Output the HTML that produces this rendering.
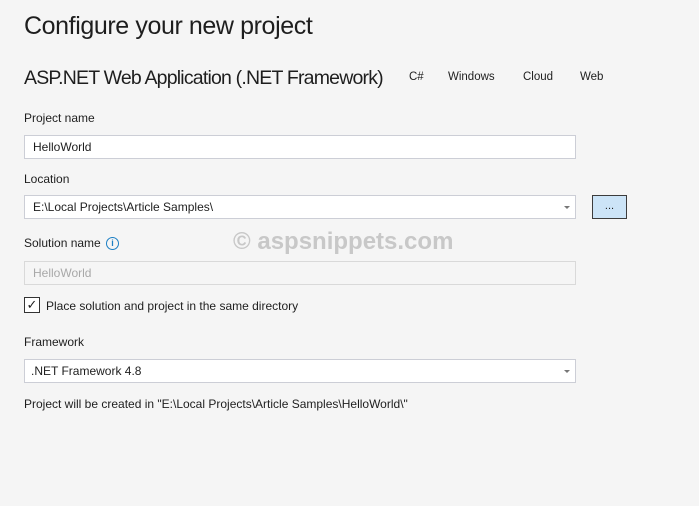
<!DOCTYPE html>
<html><head><style>
body{margin:0;width:699px;height:506px;background:#f5f5f5;font-family:"Liberation Sans",sans-serif;color:#1e1e1e;position:relative;overflow:hidden}
.a{position:absolute;white-space:nowrap}
.lbl{font-size:12px}
.in{position:absolute;left:24px;width:550px;height:22px;background:#fff;border:1px solid #ccced6;font-size:12px;line-height:22px;box-sizing:content-box}
.arr{position:absolute;right:5px;top:10px;width:0;height:0;border-left:3px solid transparent;border-right:3px solid transparent;border-top:3px solid #777}
</style></head><body>
<div class="a" style="left:24px;top:12px;font-size:25px;letter-spacing:-0.4px">Configure your new project</div>
<div class="a" style="left:24px;top:67px;font-size:19.5px;letter-spacing:-0.8px">ASP.NET Web Application (.NET Framework)</div>
<div class="a lbl" style="left:409px;top:71px;font-size:11.5px">C#</div>
<div class="a lbl" style="left:448px;top:71px;font-size:11.5px">Windows</div>
<div class="a lbl" style="left:523px;top:71px;font-size:11.5px">Cloud</div>
<div class="a lbl" style="left:580px;top:71px;font-size:11.5px">Web</div>
<div class="a lbl" style="left:24px;top:111px">Project name</div>
<div class="in" style="top:135px"><span style="padding-left:8px">HelloWorld</span></div>
<div class="a lbl" style="left:24px;top:172px">Location</div>
<div class="in" style="top:195px"><span style="padding-left:8px">E:\Local Projects\Article Samples\</span><div class="arr"></div></div>
<div class="a" style="left:592px;top:195px;width:33px;height:22px;background:#cce4f7;border:1px solid #3c3c3c;font-size:11px;text-align:center;line-height:20px">...</div>
<div class="a lbl" style="left:24px;top:236px">Solution name</div>
<div class="a" style="left:106px;top:237px;width:11px;height:11px;border:1.3px solid #1c7fc4;border-radius:50%;color:#1c7fc4;font-size:9px;font-weight:bold;text-align:center;line-height:11px">i</div>
<div class="a" style="left:233px;top:228px;font-size:24px;font-weight:bold;color:#c8c8c8">© aspsnippets.com</div>
<div class="in" style="top:261px;background:#f5f5f5;border-color:#d9d9d9;color:#a8a8a8"><span style="padding-left:8px">HelloWorld</span></div>
<div class="a" style="left:24px;top:297px;width:14px;height:14px;border:1px solid #333;background:#fff;font-size:13px;line-height:14px;text-align:center">✓</div>
<div class="a lbl" style="left:46px;top:299px">Place solution and project in the same directory</div>
<div class="a lbl" style="left:24px;top:335px">Framework</div>
<div class="in" style="top:359px"><span style="padding-left:6px">.NET Framework 4.8</span><div class="arr"></div></div>
<div class="a lbl" style="left:24px;top:397px">Project will be created in "E:\Local Projects\Article Samples\HelloWorld\"</div>
</body></html>
